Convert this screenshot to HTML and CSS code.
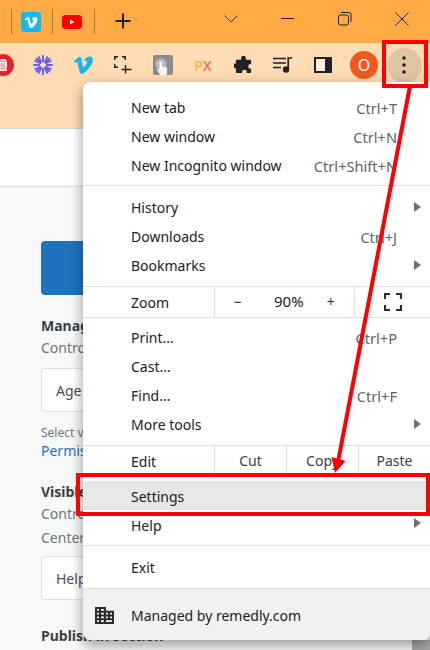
FILE: index.html
```html
<!DOCTYPE html>
<html lang="en">
<head>
    <meta charset="UTF-8">
    <meta name="viewport" content="width=device-width, initial-scale=1.0">
    <title>Chrome menu - Settings</title>
    <link rel="stylesheet" href="styles.css">
</head>
<body>
    <div class="tabstrip">
        <span class="tab-sep"></span>
        <svg class="tab-icon" width="20" height="20" viewBox="0 0 20 20"><rect width="20" height="20" rx="3" fill="#1ab7ea"/><path d="M3.600 7.400 4.300 8.300c1.500-1 2-1 2.500.6l1.500 5.300c.7 1.900 1.500 2.300 3 1.300 2.200-1.500 4.700-4.600 5.200-7.600.3-2.500-1.500-3.500-3.500-2.800-1.200.5-2 1.400-2.400 2.800 1.300-.6 2.100-.3 1.800 1-.2 1-1 2.200-1.700 2.700-.7.4-1-.6-1.300-2l-.7-3.100C8.300 4.700 7.500 4.200 6.300 5.100Z" fill="#fff"/></svg>
        <span class="tab-sep"></span>
        <svg class="tab-icon yt-icon" width="20" height="14" viewBox="0 0 20 14"><rect width="20" height="14" rx="3.500" fill="#f00"/><path d="M8 4.500v5l4.500-2.500Z" fill="#fff"/></svg>
        <span class="tab-sep"></span>
        <svg class="new-tab" width="16" height="16" viewBox="0 0 16 16"><path d="M8 .5v15M.5 8h15" stroke="#202124" stroke-width="2" fill="none"/></svg>
        <div class="win-controls">
            <svg width="14" height="14" viewBox="0 0 14 14"><path d="M.5 3.500l6.500 6.500 6.500-6.500" stroke="#3a3a3a" fill="none"/></svg>
            <svg width="14" height="14" viewBox="0 0 14 14"><path d="M0 6.500h13" stroke="#222" fill="none"/></svg>
            <svg width="14" height="14" viewBox="0 0 14 14"><rect x=".5" y="3" width="10" height="10" rx="2" stroke="#222" fill="none"/><path d="M3 .5h8a2 2 0 0 1 2 2v7.500" stroke="#222" fill="none"/></svg>
            <svg width="14" height="14" viewBox="0 0 14 14"><path d="M.5 .5l13 13M13.500 .5l-13 13" stroke="#222" fill="none"/></svg>
        </div>
    </div>

    <div class="toolbar">
        <span class="slot"><svg width="22" height="22" viewBox="0 0 22 22"><circle cx="11" cy="11" r="11" fill="#e8202a"/><path d="M7 7h8M9 7V5.500h4V7M7.500 8.500h7l-.5 8h-6Z" stroke="#fff" stroke-width="1.200" fill="#f8b4b4"/></svg></span>
        <span class="slot"><svg width="20" height="20" viewBox="0 0 22 22"><g stroke="#6a5cf5" stroke-width="2.200" stroke-linecap="round"><path d="M11 1v6M11 15v6M1 11h6M15 11h6M3.900 3.900l4.200 4.200M13.900 13.900l4.200 4.200M18.100 3.900l-4.200 4.200M8.100 13.900l-4.200 4.200"/><path d="M6.500 2.500l2.300 5.300M13.200 14.200l2.300 5.300M15.500 2.500l-2.300 5.300M8.800 14.200l-2.300 5.300M2.500 6.500l5.300 2.300M14.200 13.200l5.300 2.300M19.500 6.500l-5.300 2.300M7.800 13.200l-5.300 2.300"/></g></svg></span>
        <span class="slot"><svg width="21" height="19" viewBox="0 0 22 20"><path d="M.5 6 1.400 7.200C3.300 5.800 4 5.800 4.700 8l2 7.700c1 2.900 2.100 4 4 2.900 3.100-1.900 7.200-6.500 9.500-11.200C21.800 3 20.400.5 17.500.6c-2.200 0-4.800 1.500-6 5 1.700-.9 3.300-.6 3 1.200-.2 1.400-1.600 3.500-2.700 4.300-1 .7-1.700-.9-2-2.800L9 3.500C8.500 1 7.300 0 5.400 1.300Z" fill="#1ab7ea"/></svg></span>
        <span class="slot"><svg width="18" height="18" viewBox="0 0 18 18"><path d="M4 .8H.8V4M8 .8h3.200V4M.8 8v3.200H4" stroke="#202124" stroke-width="1.500" fill="none"/><path d="M11.500 9v8.500M7.500 13.500h10" stroke="#202124" stroke-width="1.400" fill="none"/></svg></span>
        <span class="slot"><svg width="20" height="20" viewBox="0 0 20 20"><rect width="20" height="20" rx="2" fill="#8d8d8d"/><circle cx="8" cy="9" r="5.500" fill="#b9b9b9"/><path d="M6.500 7.500a1.300 1.300 0 0 1 2.600 0v4l5 1v6l-1 1.500H7L4 14l1-.5 1.500 1.500Z" fill="#f2f6fb"/></svg></span>
        <span class="slot px-badge"><span class="px-p">P</span><span class="px-x">X</span></span>
        <span class="slot"><svg width="19" height="18" viewBox="0 0 20 19"><path d="M7.500 2.300a2.500 2.500 0 0 1 5 0V4H17a1 1 0 0 1 1 1v3.500h-.5a2.500 2.500 0 0 0 0 5h.5V17a1 1 0 0 1-1 1h-3.500v-1a2.500 2.500 0 0 0-5 0v1H3a1 1 0 0 1-1-1v-4H1a2.500 2.500 0 0 1 0-5h1V5a1 1 0 0 1 1-1h4.500Z" fill="#202124"/></svg></span>
        <span class="slot"><svg width="20" height="16" viewBox="0 0 20 16"><path d="M0 1.500h13M0 6h13M0 10.500h8" stroke="#202124" stroke-width="1.500" fill="none"/><circle cx="13" cy="12.500" r="3.200" fill="#202124"/><path d="M15.200 12.500V1h4" stroke="#202124" stroke-width="1.700" fill="none"/></svg></span>
        <span class="slot"><svg width="18" height="16" viewBox="0 0 18 16"><rect x="1" y="1" width="16" height="14" fill="#fff3e3" stroke="#202124" stroke-width="2"/><rect x="11" y="1" width="6" height="14" fill="#202124"/></svg></span>
        <span class="slot slot-end"><span class="avatar">O</span></span>
        <span class="slot"><span class="menu-btn"><svg width="4" height="18" viewBox="0 0 4 18"><circle cx="2" cy="2" r="1.800" fill="#202124"/><circle cx="2" cy="9" r="1.800" fill="#202124"/><circle cx="2" cy="16" r="1.800" fill="#202124"/></svg></span></span>
    </div>

    <div class="page-head"></div>
    <div class="page-body">
        <div class="blue-btn"></div>
        <h4>Manag</h4>
        <p class="muted">Contro</p>
        <div class="select-box">Age</div>
        <p class="hint">Select v</p>
        <a class="link">Permis</a>
        <h4 class="visible-head">Visible</h4>
        <p class="muted">Contro</p>
        <p class="muted center-line">Center</p>
        <div class="select-box help-box">Help</div>
        <h4 class="publish-head">Publish in section</h4>
    </div>

    <div class="scrollbar"></div>

    <div class="chrome-menu">
        <div class="menu-group">
            <div class="row"><span>New tab</span><span class="key">Ctrl+T</span></div>
            <div class="row"><span>New window</span><span class="key">Ctrl+N</span></div>
            <div class="row"><span>New Incognito window</span><span class="key">Ctrl+Shift+N</span></div>
        </div>
        <div class="menu-group wide-gap">
            <div class="row"><span>History</span><i class="arrow"></i></div>
            <div class="row"><span>Downloads</span><span class="key">Ctrl+J</span></div>
            <div class="row"><span>Bookmarks</span><i class="arrow"></i></div>
        </div>
        <div class="split-row zoom-row">
            <span class="split-label">Zoom</span>
            <div class="zoom-ctrl"><span class="minus">−</span><span class="level">90%</span><span class="plus">+</span></div>
            <div class="full-btn"><svg width="18" height="18" viewBox="0 0 18 18"><path d="M1 6V1h5M12 1h5v5M1 12v5h5M17 12v5h-5" stroke="#2a2c30" stroke-width="2.200" fill="none"/></svg></div>
        </div>
        <div class="menu-group wide-gap">
            <div class="row"><span>Print...</span><span class="key">Ctrl+P</span></div>
            <div class="row"><span>Cast...</span></div>
            <div class="row"><span>Find...</span><span class="key">Ctrl+F</span></div>
            <div class="row"><span>More tools</span><i class="arrow"></i></div>
        </div>
        <div class="split-row edit-row">
            <span class="split-label">Edit</span>
            <span class="edit-btn">Cut</span>
            <span class="edit-btn">Copy</span>
            <span class="edit-btn">Paste</span>
        </div>
        <div class="menu-group settings-group">
            <div class="row active"><span>Settings</span></div>
            <div class="row help-row"><span>Help</span><i class="arrow"></i></div>
        </div>
        <div class="menu-group exit-group">
            <div class="row"><span>Exit</span></div>
        </div>
        <div class="managed">
            <svg width="19" height="17" viewBox="0 0 19 18" preserveAspectRatio="none"><path fill-rule="evenodd" d="M0 0h11v4h8v14H0ZM2 2v2h2V2Zm4 0v2h3V2ZM2 6v2h2V6Zm4 0v2h3V6ZM2 10v2h2v-2Zm4 0v2h3v-2ZM2 14v2h2v-2Zm4 0v2h3v-2Zm5-8v2h2V6Zm4 0v2h2V6Zm-4 4v2h2v-2Zm4 0v2h2v-2Zm-4 4v2h6v-2Z" fill="#2b2b2b"/></svg>
            <span>Managed by remedly.com</span>
        </div>
    </div>

    <div class="mark mark-menu"></div>
    <div class="mark mark-settings"></div>
    <svg class="mark-arrow" width="430" height="650" viewBox="0 0 430 650"><path d="M410 86 338 462" stroke="#f00" stroke-width="4" fill="none"/><path d="M331.500 457 345.500 461 335 473Z" fill="#f00"/></svg>
</body>
</html>
```
FILE: styles.css
```css
* {
    margin: 0;
    padding: 0;
    box-sizing: border-box;
}

body {
    width: 430px;
    height: 650px;
    overflow: hidden;
    position: relative;
    font-family: "Noto Sans", "Open Sans", sans-serif;
    font-size: 14px;
    color: #202124;
    background: #f7f9f9;
}

.tabstrip {
    height: 43px;
    background: #ffaa44;
    display: flex;
    align-items: center;
    padding-left: 11px;
}

.tab-sep {
    width: 1px;
    height: 25px;
    background: #a67a3e;
}

.tab-icon {
    margin: 0 11px 0 9px;
}

.yt-icon {
    margin-right: 12px;
}

.new-tab {
    margin-left: 20px;
    margin-bottom: 1px;
}

.win-controls {
    margin-left: auto;
    display: flex;
    gap: 43px;
    margin-bottom: 6px;
    margin-right: 21px;
}

.toolbar {
    height: 86px;
    background: #ffdcb3;
    border-bottom: 1px solid #d8d3cc;
    display: flex;
    align-items: flex-start;
    margin-left: -17px;
}

.slot {
    width: 40px;
    height: 44px;
    flex: none;
    display: flex;
    align-items: center;
    justify-content: center;
}

.slot-end {
    margin-left: 1px;
}

.px-badge {
    font-size: 14px;
    font-weight: 500;
}

.px-p {
    color: #f9b233;
}

.px-x {
    color: #ef6a4c;
}

.avatar {
    width: 28px;
    height: 28px;
    border-radius: 50%;
    background: #f4581f;
    color: #fff;
    font-size: 16px;
    display: flex;
    align-items: center;
    justify-content: center;
}

.menu-btn {
    width: 35px;
    height: 35px;
    border-radius: 50%;
    background: #e0c5a5;
    display: flex;
    align-items: center;
    justify-content: center;
}

.page-head {
    height: 58px;
    background: #fff;
    border-bottom: 1px solid #dcdcdc;
}

.page-body {
    padding: 54px 0 0 41px;
    color: #212529;
}

.blue-btn {
    width: 120px;
    height: 54px;
    border-radius: 4px;
    background: #1e73be;
}

.page-body h4 {
    font-size: 14px;
    font-weight: 700;
    line-height: 20px;
    margin-top: 21px;
    color: #3b3f44;
}

.muted {
    color: #6c757d;
    line-height: 20px;
    margin-top: 2px;
}

.select-box {
    width: 200px;
    height: 44px;
    margin-top: 10px;
    padding: 0 14px;
    line-height: 44px;
    background: #fff;
    border: 1px solid #dee2e6;
    border-radius: 4px;
    color: #495057;
}

.hint {
    font-size: 12px;
    line-height: 16px;
    margin-top: 13px;
    color: #6c757d;
}

.link {
    display: block;
    color: #1e73be;
    line-height: 20px;
}

.page-body .visible-head {
    margin-top: 21px;
}

.center-line {
    margin-top: 4px;
}

.help-box {
    margin-top: 8px;
}

.page-body .publish-head {
    margin-top: 26px;
}

.scrollbar {
    position: absolute;
    right: 0;
    top: 640px;
    width: 18px;
    height: 10px;
    background: #a8a8a8;
}

/* chrome menu sits over the page */
.chrome-menu {
    position: absolute;
    left: 83px;
    top: 82px;
    width: 347px;
    height: 558px;
    padding-top: 12px;
    background: #fff;
    border-radius: 8px 0 8px 8px;
    box-shadow: 0 5px 14px rgba(0, 0, 0, 0.4);
    display: flex;
    flex-direction: column;
    overflow: hidden;
}

.menu-group {
    padding-bottom: 4px;
    border-bottom: 1px solid #dedede;
}

.menu-group + .menu-group {
    padding-top: 8px;
}

.split-row + .menu-group {
    padding-top: 6px;
}

.wide-gap {
    padding-bottom: 5px;
}

.row {
    height: 29px;
    padding: 0 33px 2px 48px;
    display: flex;
    align-items: center;
    justify-content: space-between;
    position: relative;
}

.key {
    font-size: 14.600px;
    color: #5f6368;
}

.arrow {
    position: absolute;
    right: 9px;
    top: 8px;
    border-left: 7px solid #6f6f6f;
    border-top: 5px solid transparent;
    border-bottom: 5px solid transparent;
}

.split-row {
    display: flex;
    align-items: stretch;
    border-bottom: 1px solid #dedede;
}

.split-label {
    width: 132px;
    flex: none;
    padding-left: 48px;
    display: flex;
    align-items: center;
    border-right: 1px solid #dedede;
}

.zoom-row {
    height: 31px;
}

.zoom-row .split-label {
    padding-top: 1px;
}

.zoom-ctrl {
    width: 140px;
    flex: none;
    display: flex;
    align-items: center;
    padding: 0 0 2px 19px;
    border-right: 1px solid #dedede;
}

.level {
    font-size: 15px;
    margin-left: 32px;
}

.plus {
    margin-left: 23px;
    color: #4b1a66;
}

.full-btn {
    flex: 1;
    display: flex;
    align-items: center;
    justify-content: center;
}

.edit-row {
    height: 32px;
    border-bottom: none;
}

.edit-row .split-label {
    padding-bottom: 2px;
}

.edit-btn {
    width: 72px;
    flex: none;
    padding-bottom: 4px;
    display: flex;
    align-items: center;
    justify-content: center;
    border-right: 1px solid #dedede;
    color: #3c4043;
}

.edit-btn:last-child {
    flex: 1;
    border-right: none;
}

.split-row + .settings-group {
    padding-top: 3px;
    padding-bottom: 6px;
}

.settings-group .row {
    padding-top: 2px;
    padding-bottom: 0;
}

.active {
    background: #e6e6e6;
}

.exit-group {
    padding-bottom: 5px;
}

.managed {
    flex: 1;
    background: #f1f1f1;
    display: flex;
    align-items: center;
    gap: 17px;
    padding: 2px 0 0 12px;
}

/* red annotations */
.mark {
    position: absolute;
    border: 4px solid #f00;
}

.mark-menu {
    left: 382px;
    top: 40px;
    width: 46px;
    height: 48px;
}

.mark-settings {
    left: 76px;
    top: 473px;
    width: 354px;
    height: 43px;
}

.mark-arrow {
    position: absolute;
    left: 0;
    top: 0;
}
```
